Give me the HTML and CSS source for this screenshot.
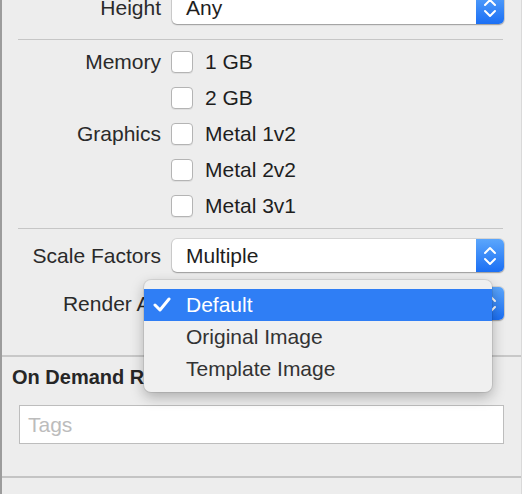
FILE: index.html
```html
<!DOCTYPE html>
<html>
<head>
<meta charset="utf-8">
<link rel="stylesheet" href="styles.css">
</head>
<body>
<div class="panel">
  <div class="row first">
    <div class="label">Height</div>
    <div class="popup"><span class="val">Any</span><span class="stepper"><svg width="14" height="24" viewBox="0 0 14 24"><polyline points="2,9 7,4 12,9" /><polyline points="2,15 7,20 12,15" /></svg></span></div>
  </div>
  <div class="sep"></div>
  <div class="checks">
    <div class="row crow"><div class="label">Memory</div><label class="check"><span class="box"></span>1 GB</label></div>
    <div class="row crow"><div class="label"></div><label class="check"><span class="box"></span>2 GB</label></div>
    <div class="row crow"><div class="label">Graphics</div><label class="check"><span class="box"></span>Metal 1v2</label></div>
    <div class="row crow"><div class="label"></div><label class="check"><span class="box"></span>Metal 2v2</label></div>
    <div class="row crow"><div class="label"></div><label class="check"><span class="box"></span>Metal 3v1</label></div>
  </div>
  <div class="sep sep2"></div>
  <div class="row scale">
    <div class="label">Scale Factors</div>
    <div class="popup"><span class="val">Multiple</span><span class="stepper"><svg width="14" height="24" viewBox="0 0 14 24"><polyline points="2,9 7,4 12,9" /><polyline points="2,15 7,20 12,15" /></svg></span></div>
  </div>
  <div class="row render">
    <div class="label">Render As</div>
    <div class="popup anchor"><span class="val">Default</span><span class="stepper"><svg width="14" height="24" viewBox="0 0 14 24"><polyline points="2,9 7,4 12,9" /><polyline points="2,15 7,20 12,15" /></svg></span>
      <div class="menu">
        <div class="item selected"><svg class="tick" width="18" height="16" viewBox="0 0 18 16"><polyline points="2,8 7,13 16,2" /></svg>Default</div>
        <div class="item">Original Image</div>
        <div class="item">Template Image</div>
      </div>
    </div>
  </div>
  <div class="fullsep"></div>
  <div class="odr">
    <div class="heading">On Demand Resource Tags</div>
    <div class="tags">Tags</div>
  </div>
  <div class="fullsep bottom"></div>
</div>
</body>
</html>
```

FILE: styles.css
```css
html, body {
  margin: 0;
  padding: 0;
}
body {
  width: 522px;
  height: 494px;
  overflow: hidden;
  background: #ededed;
  font-family: "Liberation Sans", Arial, sans-serif;
  font-size: 21px;
  color: #262626;
}
.panel {
  height: 494px;
  box-sizing: border-box;
  border-left: 2px solid #9c9c9c;
  border-right: 1px solid #d9d9d9;
  overflow: hidden;
}
.row {
  display: grid;
  grid-template-columns: 159px 332px;
  column-gap: 11px;
  align-items: center;
}
.label {
  text-align: right;
  white-space: nowrap;
  color: #2a2a2a;
}
.first {
  margin-top: -9px;
}
.popup {
  height: 33px;
  box-sizing: border-box;
  background: #fff;
  border-radius: 5px;
  box-shadow: 0 0 0 1px rgba(0, 0, 0, 0.1), 0 1px 1.5px rgba(0, 0, 0, 0.28);
  display: flex;
  align-items: center;
  position: relative;
}
.val {
  flex: 1;
  padding-left: 14px;
  color: #1e1e1e;
}
.stepper {
  width: 28px;
  align-self: stretch;
  border-radius: 0 5px 5px 0;
  background: linear-gradient(#5ba6fc, #1b6ff4);
  display: flex;
  align-items: center;
  justify-content: center;
}
.stepper svg polyline {
  fill: none;
  stroke: #fff;
  stroke-width: 2;
  stroke-linecap: round;
  stroke-linejoin: round;
}
.sep {
  height: 1px;
  background: #c6c6c6;
  margin: 15px 18px 0 16px;
}
.checks {
  margin-top: 4px;
}
.crow {
  height: 36px;
}
.check {
  display: flex;
  align-items: center;
  gap: 12px;
  color: #1e1e1e;
}
.box {
  width: 20px;
  height: 20px;
  margin-left: -1px;
  border: 1px solid #b4b4b4;
  border-radius: 4px;
  background: #fff;
  box-shadow: 0 1px 0 rgba(0, 0, 0, 0.06);
}
.sep2 {
  margin-top: 4px;
}
.scale {
  margin-top: 10px;
}
.render {
  margin-top: 15px;
}
.anchor .val {
  visibility: hidden;
}
.menu {
  position: absolute;
  left: -28px;
  top: -7px;
  width: 348px;
  box-sizing: border-box;
  padding: 9px 0 7px;
  background: #f0f0f0;
  border-radius: 7px;
  box-shadow: 0 0 0 1px rgba(0, 0, 0, 0.08), 0 5px 14px rgba(0, 0, 0, 0.28);
  z-index: 5;
}
.item {
  height: 32px;
  display: flex;
  align-items: center;
  padding-left: 42px;
  position: relative;
  color: #333;
}
.item.selected {
  background: #2f7ef5;
  color: #fff;
}
.tick {
  position: absolute;
  left: 9px;
  top: 8px;
}
.tick polyline {
  fill: none;
  stroke: #fff;
  stroke-width: 3;
  stroke-linecap: round;
  stroke-linejoin: round;
}
.fullsep {
  height: 2px;
  background: #c8c8c8;
  margin-top: 35px;
}
.odr {
  padding: 8px 0 0 10px;
}
.heading {
  font-weight: bold;
  font-size: 20px;
  line-height: 24px;
  color: #262626;
  white-space: nowrap;
}
.tags {
  margin: 16px 0 0 7px;
  width: 485px;
  height: 39px;
  box-sizing: border-box;
  border: 1px solid #bdbdbd;
  background: #fff;
  color: #bcbcbc;
  padding-left: 8px;
  display: flex;
  align-items: center;
}
.fullsep.bottom {
  margin-top: 32px;
  background: #c4c4c4;
}
```
